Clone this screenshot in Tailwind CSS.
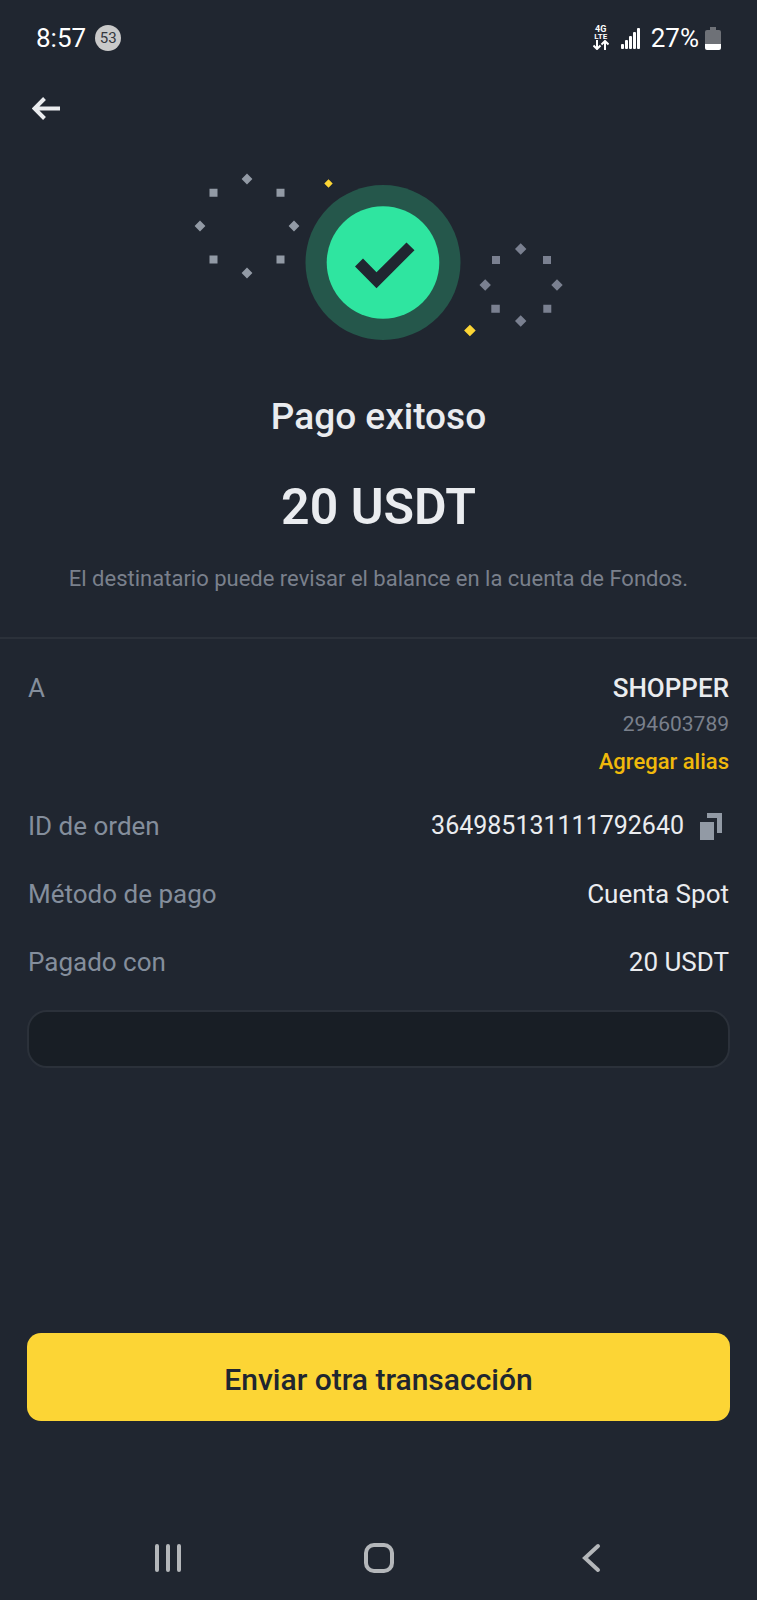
<!DOCTYPE html>
<html lang="es">
<head>
<meta charset="utf-8">
<meta name="viewport" content="width=device-width, initial-scale=1">
<title>Pago exitoso</title>
<script src="https://cdn.jsdelivr.net/npm/@tailwindcss/browser@4"></script>
</head>
<body class="flex min-h-screen flex-col bg-[#202630] font-['Roboto',sans-serif] text-[#eaecef]">
  <div class="flex h-[76px] items-center justify-between px-9 text-[26px] text-white">
    <div class="flex items-center gap-[9px]">
      <span>8:57</span>
      <span class="flex size-[26px] items-center justify-center rounded-full bg-[#c9c9c9] text-[15px] text-[#33373d]">53</span>
    </div>
    <div class="flex items-center">
      <div class="mr-3 flex flex-col items-center font-bold">
        <span class="text-[9px] leading-[7px]">4G</span>
        <span class="text-[8px] leading-[7px]">LTE</span>
        <svg class="h-[10px] w-4" viewBox="0 0 16 10" fill="none" stroke="currentColor" stroke-width="2" aria-hidden="true"><path d="M4 0v9M.5 5.500 4 9l3.500-3.500M12 10V1M8.500 4.500 12 1l3.500 3.500"/></svg>
      </div>
      <svg class="mr-2.5 h-[22px] w-5" viewBox="0 0 20 22" fill="currentColor" aria-hidden="true"><rect y="17" width="3" height="5" rx="1"/><rect x="4" y="13" width="3" height="9" rx="1"/><rect x="8" y="9" width="3" height="13" rx="1"/><rect x="12" y="5" width="3" height="17" rx="1"/><rect x="16" y="1" width="3" height="21" rx="1"/></svg>
      <span>27%</span>
      <svg class="ml-1.5 h-6 w-4" viewBox="0 0 16 24" aria-hidden="true"><path d="M5 1h6v3h3q2 0 2 2v12H0V6q0-2 2-2h3z" fill="#6e7177"/><path d="M0 18h16v4q0 2-2 2H2q-2 0-2-2z" fill="#fff"/></svg>
    </div>
  </div>

  <header class="flex h-16 items-center px-7">
    <button type="button" aria-label="Volver" class="p-1">
      <svg class="h-6 w-7" viewBox="0 0 28 24" fill="none" stroke="currentColor" stroke-width="4" aria-hidden="true"><path d="M28 12.500H3M12.500 2.500l-10 10 10 10"/></svg>
    </button>
  </header>

  <main class="flex flex-1 flex-col">
    <section class="flex flex-col items-center border-b-2 border-[#2b313a] px-7 pt-6 pb-[42px] text-center">
      <svg class="h-[184px] w-[378px]" viewBox="190 164 378 184" aria-hidden="true">
        <circle cx="383" cy="262.500" r="77.500" fill="#25574b"/>
        <circle cx="383" cy="262.500" r="56.300" fill="#2fe5a0"/>
        <path d="M355 266.500l8-8 13.500 13.800 30-29.800 8 7.700-38 38z" fill="#202630"/>
        <path fill="#929aa5" d="M209.500 188.800h8v8h-8zM276.500 188.800h8v8h-8zM209.500 255.500h8v8h-8zM276.500 255.500h8v8h-8zM247 173.600l5.400 5.400-5.400 5.400-5.400-5.400zM200 220.600l5.400 5.400-5.400 5.400-5.400-5.400zM294 220.600l5.400 5.400-5.400 5.400-5.400-5.400zM247 267.600l5.400 5.400-5.400 5.400-5.400-5.400z"/>
        <path fill="#7a8090" d="M492 256h8v8h-8zM543 256h8v8h-8zM491.300 304.700h8.500v8h-8.500zM543.300 304.700h8v8h-8zM520.700 243.300l5.700 5.700-5.700 5.700-5.700-5.700zM485.200 279.300l5.700 5.700-5.700 5.700-5.700-5.700zM557 279.300l5.700 5.700-5.700 5.700-5.700-5.700zM520.700 315.300l5.700 5.700-5.700 5.700-5.700-5.700z"/>
        <path fill="#fcd535" d="M328.500 179.300l4.200 4.200-4.200 4.200-4.200-4.200zM469.900 324.700l5.800 5.800-5.800 5.800-5.800-5.800z"/>
      </svg>
      <h1 class="mt-[45px] text-[37px] leading-[48px] font-medium">Pago exitoso</h1>
      <p class="mt-[34px] text-[50px] leading-[64px] font-semibold">20 USDT</p>
      <p class="mt-6 text-[22px] leading-8 text-[#7a808c]">El destinatario puede revisar el balance en la cuenta de Fondos.</p>
    </section>

    <section class="px-[27px] pt-[31px]">
      <dl class="flex flex-col gap-8 px-px text-[26px] leading-9">
        <div class="flex justify-between">
          <dt class="text-[#848e9c]">A</dt>
          <dd class="flex flex-col items-end">
            <span class="font-medium">SHOPPER</span>
            <span class="mt-1 text-[21px] leading-7 text-[#7a808c]">294603789</span>
            <a href="#" class="mt-2 text-[22px] leading-8 font-medium text-[#f0b90b]">Agregar alias</a>
          </dd>
        </div>
        <div class="-mt-0.5 flex justify-between">
          <dt class="text-[#848e9c]">ID de orden</dt>
          <dd class="flex items-center gap-4">
            <span class="text-[25px]">364985131111792640</span>
            <button type="button" aria-label="Copiar ID de orden" class="mr-[7px]">
              <svg class="h-7 w-[22px]" viewBox="0 0 22 28" fill="#929aa5" aria-hidden="true"><path d="M7 1h15v20h-5V6H7zM0 10h14v18H0z"/></svg>
            </button>
          </dd>
        </div>
        <div class="flex justify-between">
          <dt class="text-[#848e9c]">Método de pago</dt>
          <dd>Cuenta Spot</dd>
        </div>
        <div class="flex justify-between">
          <dt class="text-[#848e9c]">Pagado con</dt>
          <dd>20 USDT</dd>
        </div>
      </dl>
      <div class="mt-[30px] h-[58px] rounded-[20px] border-2 border-[#2b313a] bg-[#181e25]"></div>
    </section>

    <div class="mt-auto px-[27px] pb-[95px]">
      <button type="button" class="h-[88px] w-full rounded-[14px] bg-[#fcd535] pt-1 text-[30px] font-medium text-[#202630]">Enviar otra transacción</button>
    </div>
  </main>

  <nav class="grid h-[84px] grid-cols-[1fr_auto_1fr] items-center px-[152px] text-[#b4b7ba]">
    <button type="button" aria-label="Recientes" class="justify-self-start"><svg class="h-8 w-8" viewBox="0 0 32 32" fill="none" stroke="currentColor" stroke-width="4" stroke-linecap="round" aria-hidden="true"><path d="M5 4v24M16 4v24M27 4v24"/></svg></button>
    <button type="button" aria-label="Inicio"><svg class="h-8 w-8" viewBox="0 0 32 32" fill="none" stroke="currentColor" stroke-width="4" aria-hidden="true"><rect x="3" y="3" width="26" height="26" rx="8"/></svg></button>
    <button type="button" aria-label="Atrás" class="justify-self-end"><svg class="h-8 w-6" viewBox="0 0 24 32" fill="none" stroke="currentColor" stroke-width="4" stroke-linecap="round" aria-hidden="true"><path d="M17 4 4 16l13 12"/></svg></button>
  </nav>
</body>
</html>
